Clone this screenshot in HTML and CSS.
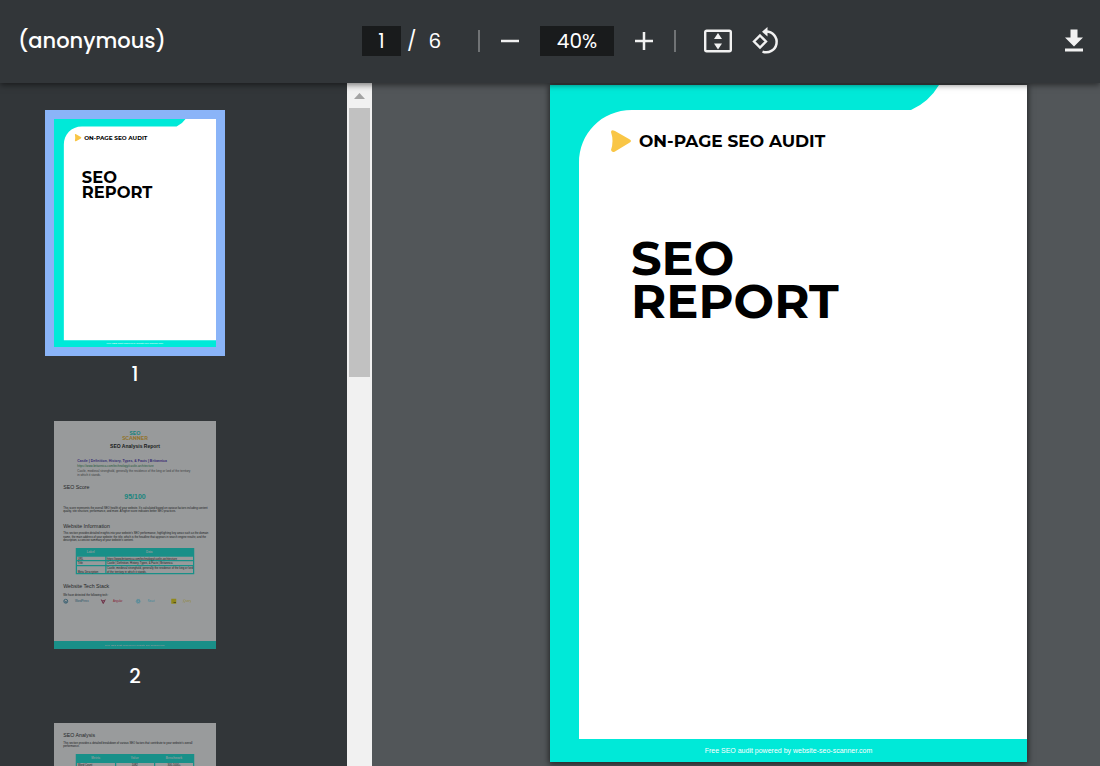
FILE: index.html
```html
<!DOCTYPE html>
<html lang="en">
<head>
  <meta charset="UTF-8" />
  <meta name="viewport" content="width=device-width, initial-scale=1.0"/>
  <title>(anonymous)</title>
  <link rel="stylesheet" href="styles.css">
</head>
<body>
  <!-- cover artwork, shared by the page and its thumbnail -->
  <svg class="defs" aria-hidden="true">
    <symbol id="cover" viewBox="0 0 477 677">
      <rect width="477" height="677" fill="#00e9d8"/>
      <path d="M389 0H477V654H29V78C29 49 51 25 82 25H361Q379 17 389 0Z" fill="#fff"/>
    </symbol>
    <symbol id="play" viewBox="0 0 20 22">
      <path d="M0 2Q0-1 4 1L18 9Q22 11 18 13L4 21.500Q1 23 0 20Q3 11 0 2Z" fill="#f9c646"/>
    </symbol>
  </svg>

  <header class="toolbar">
    <h1 class="title">(anonymous)</h1>
    <div class="pages">
      <input class="field page-field" type="text" value="1" aria-label="Page number">
      <span>/</span>
      <span class="total">6</span>
    </div>
    <div class="controls">
      <span class="separator"></span>
      <button class="icon" aria-label="Zoom out">
        <svg viewBox="0 0 28 28"><path d="M5 14H23" stroke="#f1f1f1" stroke-width="2.500"/></svg>
      </button>
      <input class="field zoom-field" type="text" value="40%" aria-label="Zoom level">
      <button class="icon" aria-label="Zoom in">
        <svg viewBox="0 0 28 28"><path d="M5 14H23M14 5V23" stroke="#f1f1f1" stroke-width="2.500"/></svg>
      </button>
      <span class="separator"></span>
    </div>
    <div class="view">
      <button class="icon" aria-label="Fit to page">
        <svg viewBox="0 0 28 28">
          <rect x="1.200" y="3.700" width="25.600" height="20.600" rx="1.500" fill="none" stroke="#f1f1f1" stroke-width="2.400"/>
          <path d="M14 6L18 12H10ZM14 22.500L18 16.500H10Z" fill="#f1f1f1"/>
        </svg>
      </button>
      <button class="icon" aria-label="Rotate counterclockwise">
        <svg viewBox="0 0 28 28">
          <path d="M8 8.500L14 14.500L8 20.500L2 14.500Z" fill="none" stroke="#f1f1f1" stroke-width="2.400"/>
          <path d="M14 4.500A10.400 10.400 0 1 1 10.500 24.600" fill="none" stroke="#f1f1f1" stroke-width="2.500"/>
          <path d="M15.500 0V9.500L10 4.800Z" fill="#f1f1f1"/>
        </svg>
      </button>
    </div>
    <button class="icon download" aria-label="Download">
      <svg viewBox="0 0 28 28"><path d="M10.500 2.500H17.500V10.500H23L14 19.500L5 10.500H10.500ZM5 21.500H23V24.500H5Z" fill="#f1f1f1"/></svg>
    </button>
  </header>

  <main class="content">
    <nav class="sidebar">
      <button class="thumb active">
        <svg class="sheet" viewBox="0 0 477 677" preserveAspectRatio="xMidYMid slice">
          <use href="#cover" width="477" height="677"/>
          <use href="#play" x="61" y="47" width="20" height="22"/>
          <text class="t-brand" x="89" y="64">ON-PAGE SEO AUDIT</text>
          <text class="t-title" x="82" y="192">SEO</text>
          <text class="t-title" x="82" y="235">REPORT</text>
          <text class="t-foot" x="238" y="666">Free SEO audit powered by website-seo-scanner.com</text>
        </svg>
        <span class="number">1</span>
      </button>

      <button class="thumb">
        <svg class="sheet" viewBox="0 0 648 912">
          <rect width="648" height="912" fill="#fff"/>
          <text class="t-logo teal" x="324" y="56">SEO</text>
          <text class="t-logo gold" x="324" y="75">SCANNER</text>
          <text class="t-report" x="324" y="108">SEO Analysis Report</text>
          <text class="t-link" x="93" y="164">Castle | Definition, History, Types, &amp; Facts | Britannica</text>
          <text class="t-meta green" x="93" y="184">https://www.britannica.com/technology/castle-architecture</text>
          <text class="t-meta" x="93" y="204">Castle, medieval stronghold, generally the residence of the king or lord of the territory</text>
          <text class="t-meta" x="93" y="220">in which it stands.</text>
          <text class="t-head" x="37" y="270">SEO Score</text>
          <text class="t-score" x="324" y="312">95/100</text>
          <text class="t-body" x="37" y="352">This score represents the overall SEO health of your website. It's calculated based on various factors including content</text>
          <text class="t-body" x="37" y="364">quality, site structure, performance, and more. A higher score indicates better SEO practices.</text>
          <text class="t-head" x="37" y="428">Website Information</text>
          <text class="t-body" x="37" y="452">This section provides detailed insights into your website's SEO performance, highlighting key areas such as the domain</text>
          <text class="t-body" x="37" y="467">name, the main address of your website; the title, which is the headline that appears in search engine results; and the</text>
          <text class="t-body" x="37" y="480">description, a concise summary of your website's content.</text>
          <rect x="87" y="508" width="474" height="105" fill="#00e9d8"/>
          <path d="M92 543H205V556H92ZM210 543H556V556H210ZM92 561H205V576H92ZM210 561H556V576H210ZM92 581H205V608H92ZM210 581H556V608H210Z" fill="#fff"/>
          <text class="t-col" x="147" y="528">Label</text>
          <text class="t-col" x="381" y="528">Data</text>
          <text class="t-body" x="95" y="554">URL</text>
          <text class="t-body" x="212" y="554">https://www.britannica.com/technology/castle-architecture</text>
          <text class="t-body" x="95" y="572">Title</text>
          <text class="t-body" x="212" y="572">Castle | Definition, History, Types, &amp; Facts | Britannica</text>
          <text class="t-body" x="95" y="606">Meta Description</text>
          <text class="t-body" x="212" y="592">Castle, medieval stronghold, generally the residence of the king or lord</text>
          <text class="t-body" x="212" y="606">of the territory in which it stands.</text>
          <text class="t-head" x="37" y="668">Website Tech Stack</text>
          <text class="t-body" x="37" y="700">We have detected the following tech:</text>
          <circle cx="47" cy="721" r="8" fill="none" stroke="#21759b" stroke-width="3"/>
          <path d="M41 717L45 727L47 720L50 727L53 717" fill="none" stroke="#21759b" stroke-width="2"/>
          <text class="t-tech" x="84" y="723" fill="#21759b">WordPress</text>
          <path d="M189 714L197 730L205 714M193 719H201" fill="none" stroke="#a01445" stroke-width="4"/>
          <text class="t-tech" x="236" y="723" fill="#dd0031">Angular</text>
          <g fill="none" stroke="#61dafb" stroke-width="2">
            <ellipse cx="337" cy="721" rx="9" ry="4"/>
            <ellipse cx="337" cy="721" rx="9" ry="4" transform="rotate(60 337 721)"/>
            <ellipse cx="337" cy="721" rx="9" ry="4" transform="rotate(120 337 721)"/>
          </g>
          <text class="t-tech" x="375" y="723" fill="#61dafb">React</text>
          <rect x="469" y="711" width="20" height="20" fill="#f0db00"/>
          <text class="t-js" x="477" y="728">JS</text>
          <text class="t-tech" x="515" y="723" fill="#f0db4f">jQuery</text>
          <rect y="880" width="648" height="32" fill="#00e9d8"/>
          <text class="t-foot" x="324" y="899">Free SEO audit powered by website-seo-scanner.com</text>
        </svg>
        <span class="number">2</span>
      </button>

      <button class="thumb">
        <svg class="sheet" viewBox="0 0 648 912">
          <rect width="648" height="912" fill="#fff"/>
          <text class="t-head" x="37" y="56">SEO Analysis</text>
          <text class="t-body" x="37" y="84">This section provides a detailed breakdown of various SEO factors that contribute to your website's overall</text>
          <text class="t-body" x="37" y="96">performance.</text>
          <rect x="87" y="124" width="474" height="54" fill="#00e9d8"/>
          <path d="M92 160H244V174H92ZM249 160H400V174H249ZM405 160H556V174H405Z" fill="#fff"/>
          <text class="t-col" x="167" y="144">Metric</text>
          <text class="t-col" x="323" y="144">Value</text>
          <text class="t-col" x="480" y="144">Benchmark</text>
          <text class="t-body" x="95" y="171">Word Count</text>
          <text class="t-body mid" x="323" y="171">1082</text>
          <text class="t-body mid" x="480" y="171">300-1000+</text>
        </svg>
        <span class="number">3</span>
      </button>
    </nav>

    <div class="scrollbar">
      <svg class="arrow" viewBox="0 0 12 6" preserveAspectRatio="none"><path d="M0 6L6 0L12 6Z" fill="#a3a3a3"/></svg>
      <div class="handle"></div>
    </div>

    <section class="viewer">
      <article class="page">
        <svg class="artwork" viewBox="0 0 477 677" aria-hidden="true"><use href="#cover"/></svg>
        <div class="brand">
          <svg class="play" viewBox="0 0 20 22"><use href="#play"/></svg>
          <span>ON-PAGE SEO AUDIT</span>
        </div>
        <h2 class="report-title">SEO<br>REPORT</h2>
        <footer class="page-footer">Free SEO audit powered by website-seo-scanner.com</footer>
      </article>
    </section>
  </main>
</body>
</html>
```
FILE: styles.css
```css
* {
  box-sizing: border-box;
}

body {
  margin: 0;
  height: 100vh;
  display: flex;
  flex-direction: column;
  overflow: hidden;
  background-color: #525659;
  color: #fff;
  font-family: Poppins, Inter, sans-serif;
}

button {
  padding: 0;
  border: none;
  background: none;
  color: inherit;
  font: inherit;
  cursor: pointer;
}

.defs {
  position: absolute;
  width: 0;
  height: 0;
}

/* toolbar */

.toolbar {
  position: relative;
  z-index: 1;
  flex: none;
  display: flex;
  align-items: center;
  height: 83px;
  padding: 0 12px 2px 18px;
  background-color: #323639;
  box-shadow: 0 2px 6px rgba(0, 0, 0, 0.5);
  font-size: 20px;
}

.title {
  width: 344px;
  margin: 0;
  font-size: 21px;
  font-weight: 500;
}

.pages {
  display: flex;
  align-items: center;
  gap: 6px;
  width: 116px;
}

.total {
  margin-left: 6px;
}

.field {
  height: 30px;
  padding: 0;
  border: none;
  background-color: #191b1c;
  color: #fff;
  font: inherit;
  text-align: center;
}

.page-field {
  width: 39px;
}

.zoom-field {
  width: 74px;
}

.controls {
  display: flex;
  align-items: center;
  gap: 16px;
}

.view {
  display: flex;
  gap: 20px;
  margin-left: 28px;
}

.separator {
  width: 2px;
  height: 22px;
  background-color: #707375;
}

.icon {
  width: 28px;
  height: 28px;
}

.icon svg {
  display: block;
}

.download {
  margin-left: auto;
}

/* thumbnails */

.content {
  flex: 1;
  display: flex;
  min-height: 0;
}

.sidebar {
  flex: none;
  display: flex;
  flex-direction: column;
  align-items: center;
  gap: 20px;
  width: 347px;
  padding: 27px 77px 0 0;
  overflow: hidden;
  background-color: #323639;
}

.thumb {
  flex: none;
  display: flex;
  flex-direction: column;
  align-items: center;
}

.sheet {
  width: 180px;
  height: 246px;
  border: 9px solid transparent;
  opacity: 0.5;
  font-family: "Liberation Sans", Arial, sans-serif;
}

.active .sheet {
  border-color: #8ab4f8;
  opacity: 1;
}

.number {
  font-size: 20px;
  font-weight: 500;
  line-height: 36px;
}

.t-brand {
  font: 700 17px Montserrat, Inter, sans-serif;
}

.t-title {
  font: 700 48px Montserrat, Inter, sans-serif;
}

.t-foot {
  font-size: 10px;
  fill: #fff;
  text-anchor: middle;
}

.active .t-foot {
  font-size: 7px;
}

.t-logo {
  font: 700 20px Montserrat, Inter, sans-serif;
  text-anchor: middle;
}

.t-report {
  font-size: 20px;
  font-weight: 700;
  text-anchor: middle;
}

.t-link {
  font-size: 14px;
  font-weight: 700;
  fill: #3a22b0;
}

.t-meta {
  font-size: 12px;
  fill: #444;
}

.t-head {
  font-size: 21px;
  fill: #111;
}

.t-score {
  font-size: 28px;
  font-weight: 700;
  fill: #00d5c5;
  text-anchor: middle;
}

.t-body {
  font-size: 11px;
}

.t-col {
  font-size: 12px;
  font-weight: 700;
  fill: #d5fffb;
  text-anchor: middle;
}

.t-tech {
  font-size: 11px;
}

.t-js {
  font-size: 9px;
  font-weight: 700;
}

.mid {
  text-anchor: middle;
}

.teal {
  fill: #00cfc0;
}

.gold {
  fill: #f0b429;
}

.green {
  fill: #0a7a3c;
}

/* scrollbar */

.scrollbar {
  flex: none;
  display: flex;
  flex-direction: column;
  align-items: center;
  gap: 9px;
  width: 25px;
  padding: 10px 2px 0;
  background-color: #f1f1f1;
}

.arrow {
  width: 11px;
  height: 6px;
}

.handle {
  width: 100%;
  height: 269px;
  background-color: #c1c1c1;
}

/* document */

.viewer {
  flex: 1;
  padding: 2px 73px 0 178px;
}

.page {
  position: relative;
  display: flex;
  flex-direction: column;
  width: 477px;
  height: 677px;
  padding-top: 45px;
  box-shadow: 0 1px 6px 1px rgba(0, 0, 0, 0.6);
  color: #000;
}

.artwork {
  position: absolute;
  inset: 0;
}

.brand {
  position: relative;
  display: flex;
  align-items: center;
  gap: 8px;
  padding-left: 61px;
  font-family: Montserrat, Inter, sans-serif;
  font-size: 17px;
  font-weight: 700;
  line-height: 22px;
}

.play {
  width: 20px;
  height: 22px;
}

.report-title {
  position: relative;
  margin: 85px 0 0;
  padding-left: 81px;
  font-family: Montserrat, Inter, sans-serif;
  font-size: 48px;
  font-weight: 700;
  line-height: 43px;
}

.page-footer {
  position: relative;
  margin-top: auto;
  color: #fff;
  font-family: "Liberation Sans", Arial, sans-serif;
  font-size: 7px;
  line-height: 23px;
  text-align: center;
}
```
